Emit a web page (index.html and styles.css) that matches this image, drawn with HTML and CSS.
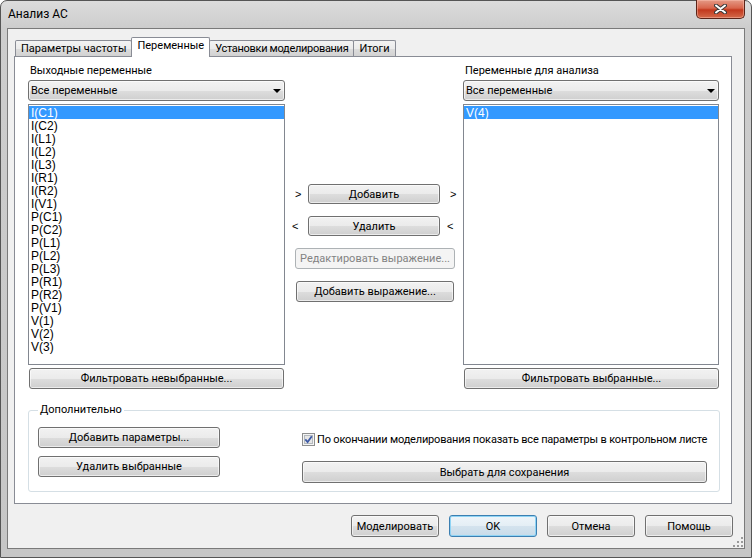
FILE: index.html
```html
<!DOCTYPE html>
<html lang="ru">

<head>
	<meta charset="UTF-8">
	<title>Анализ AC</title>
	<link rel="stylesheet" href="styles.css">
</head>

<body>
	<div class="window">
		<div class="titlebar">
			<span class="title">Анализ AC</span>
			<div class="close-btn">
				<svg width="13" height="10" viewBox="0 0 13 10">
					<path d="M2 1.5 L11 8.5 M11 1.5 L2 8.5" stroke="#3a3a3a" stroke-width="4" stroke-linecap="round" />
					<path d="M2 1.5 L11 8.5 M11 1.5 L2 8.5" stroke="#fff" stroke-width="2" stroke-linecap="round" />
				</svg>
			</div>
		</div>

		<div class="client">
			<div class="tabs">
				<div class="tab">Параметры частоты</div>
				<div class="tab active">Переменные</div>
				<div class="tab narrow">Установки моделирования</div>
				<div class="tab">Итоги</div>
			</div>

			<div class="tab-page">
				<div class="columns">
					<div class="var-col">
						<div class="label">Выходные переменные</div>
						<div class="combo">Все переменные <span class="arrow"></span></div>
						<ul class="listbox">
							<li class="selected">I(C1)</li>
							<li>I(C2)</li>
							<li>I(L1)</li>
							<li>I(L2)</li>
							<li>I(L3)</li>
							<li>I(R1)</li>
							<li>I(R2)</li>
							<li>I(V1)</li>
							<li>P(C1)</li>
							<li>P(C2)</li>
							<li>P(L1)</li>
							<li>P(L2)</li>
							<li>P(L3)</li>
							<li>P(R1)</li>
							<li>P(R2)</li>
							<li>P(V1)</li>
							<li>V(1)</li>
							<li>V(2)</li>
							<li>V(3)</li>
						</ul>
						<button class="btn filter-btn">Фильтровать невыбранные...</button>
					</div>

					<div class="mid-col">
						<div class="move-row">
							<span class="move-arrow">&gt;</span>
							<button class="btn move-btn">Добавить</button>
							<span class="move-arrow">&gt;</span>
						</div>
						<div class="move-row">
							<span class="move-arrow back">&lt;</span>
							<button class="btn move-btn">Удалить</button>
							<span class="move-arrow back">&lt;</span>
						</div>
						<button class="btn disabled edit-btn">Редактировать выражение...</button>
						<button class="btn expr-btn">Добавить выражение...</button>
					</div>

					<div class="var-col right">
						<div class="label">Переменные для анализа</div>
						<div class="combo">Все переменные <span class="arrow"></span></div>
						<ul class="listbox">
							<li class="selected">V(4)</li>
						</ul>
						<button class="btn filter-btn">Фильтровать выбранные...</button>
					</div>
				</div>

				<div class="group">
					<div class="group-title">Дополнительно</div>
					<div class="group-body">
						<div class="group-btns">
							<button class="btn">Добавить параметры...</button>
							<button class="btn">Удалить выбранные</button>
						</div>
						<div class="group-right">
							<label class="check-row">
								<svg class="checkbox" width="13" height="13" viewBox="0 0 13 13">
									<rect x="0.5" y="0.5" width="12" height="12" fill="#f4f4f4" stroke="#8e8f8f" />
									<rect x="2.5" y="2.5" width="8" height="8" fill="#e6e6e6" stroke="#b4b9be" />
									<path d="M3.3 6.4 L5.6 9 L9.8 3.2" fill="none" stroke="#3d5aa6" stroke-width="1.8" />
								</svg>
								По окончании моделирования показать все параметры в контрольном листе
							</label>
							<button class="btn save-btn">Выбрать для сохранения</button>
						</div>
					</div>
				</div>
			</div>

			<div class="dialog-buttons">
				<button class="btn">Моделировать</button>
				<button class="btn default">OK</button>
				<button class="btn">Отмена</button>
				<button class="btn">Помощь</button>
			</div>

			<svg class="grip" width="10" height="10" viewBox="0 0 10 10">
				<rect x="8" y="0" width="2" height="2" fill="#9a9a9a" />
				<rect x="4" y="4" width="2" height="2" fill="#9a9a9a" />
				<rect x="8" y="4" width="2" height="2" fill="#9a9a9a" />
				<rect x="0" y="8" width="2" height="2" fill="#9a9a9a" />
				<rect x="4" y="8" width="2" height="2" fill="#9a9a9a" />
				<rect x="8" y="8" width="2" height="2" fill="#9a9a9a" />
			</svg>
		</div>
	</div>
</body>

</html>
```

FILE: styles.css
```css
* {
	box-sizing: border-box;
}

body {
	margin: 0;
	background: #fff;
	font-family: Roboto, "Liberation Sans", sans-serif;
	font-size: 11px;
	color: #000;
}

.window {
	width: 752px;
	height: 558px;
	border: 1px solid #555;
	border-radius: 7px 7px 0 0;
	background: linear-gradient(to bottom, #dcdcdc 0, #cdcdcd 27px, #c6c6c6 100%);
	display: flex;
	flex-direction: column;
}

.titlebar {
	height: 27px;
	display: flex;
	justify-content: space-between;
	align-items: flex-start;
	padding-left: 7px;
}

.title {
	font-size: 12px;
	line-height: 16px;
	margin-top: 5px;
}

.close-btn {
	width: 49px;
	height: 19px;
	margin-top: -1px;
	margin-right: 6px;
	border: 1px solid #5c2418;
	border-top: none;
	border-radius: 0 0 5px 5px;
	background: linear-gradient(to bottom, #e49a86 0%, #d8654c 45%, #c2381d 55%, #d46a4a 100%);
	box-shadow: inset 0 0 0 1px rgba(255, 200, 185, 0.45);
	display: flex;
	justify-content: center;
	align-items: center;
}

.client {
	position: relative;
	margin-left: 6px;
	width: 738px;
	height: 521px;
	border: 1px solid #7a7a7a;
	background: #f0f0f0;
	display: flex;
	flex-direction: column;
}

/* tabs */
.tabs {
	display: flex;
	align-items: flex-end;
	height: 19px;
	margin: 8px 0 0 7px;
}

.tab {
	height: 16px;
	line-height: 15px;
	padding: 0 5px;
	margin-right: -1px;
	border: 1px solid #898c95;
	border-bottom: none;
	border-radius: 2px 2px 0 0;
	background: linear-gradient(to bottom, #f3f3f3 0%, #ebebeb 50%, #dddddd 51%, #d2d2d2 100%);
}

.tab.narrow {
	letter-spacing: -0.3px;
}

.tab.active {
	position: relative;
	z-index: 1;
	height: 20px;
	line-height: 16px;
	margin-bottom: -1px;
	background: #fff;
}

.tab-page {
	margin-left: 6px;
	width: 718px;
	height: 448px;
	border: 1px solid #898c95;
	background: #fff;
}

.columns {
	display: flex;
	padding: 7px 12px 0 13px;
}

.var-col {
	width: 257px;
	display: flex;
	flex-direction: column;
}

.var-col.right {
	width: 256px;
}

.label {
	line-height: 14px;
	padding-left: 2px;
}

.combo {
	height: 21px;
	margin-top: 2px;
	padding: 0 3px 0 2px;
	border: 1px solid #707070;
	border-radius: 3px;
	background: linear-gradient(to bottom, #f2f2f2 0%, #ebebeb 50%, #dddddd 51%, #cfcfcf 100%);
	box-shadow: inset 0 0 0 1px rgba(255, 255, 255, 0.6);
	display: flex;
	justify-content: space-between;
	align-items: center;
}

.arrow {
	width: 0;
	height: 0;
	border-left: 4px solid transparent;
	border-right: 4px solid transparent;
	border-top: 4px solid #000;
}

.listbox {
	height: 261px;
	margin: 3px 0 0;
	padding: 1px 0 0;
	list-style: none;
	border: 1px solid #828790;
	background: #fff;
	font-family: "Liberation Sans", Arial, sans-serif;
	font-size: 12px;
}

.listbox li {
	height: 13px;
	line-height: 15px;
	padding-left: 2px;
}

.listbox li.selected {
	background: #3399ff;
	color: #fff;
}

.btn {
	height: 21px;
	padding: 0;
	font-family: inherit;
	font-size: 11px;
	color: #000;
	border: 1px solid #707070;
	border-radius: 3px;
	background: linear-gradient(to bottom, #f2f2f2 0%, #ebebeb 50%, #dddddd 51%, #cfcfcf 100%);
	box-shadow: inset 0 0 0 1px rgba(255, 255, 255, 0.6);
}

.btn.disabled {
	color: #838383;
	border-color: #adb2b5;
	background: #f4f4f4;
	box-shadow: none;
}

.filter-btn {
	margin: 3px 1px 0;
}

.right .filter-btn {
	margin: 3px 0 0 1px;
}

/* middle column */
.mid-col {
	width: 178px;
	padding-top: 120px;
	display: flex;
	flex-direction: column;
	align-items: center;
}

.move-row {
	display: flex;
	align-items: center;
	margin-bottom: 12px;
}

.move-arrow {
	width: 23px;
	padding-left: 10px;
	font-family: "Liberation Sans", Arial, sans-serif;
	font-size: 11px;
}

.move-arrow.back {
	padding-left: 7px;
}

.move-btn {
	width: 132px;
	height: 20px;
}

.edit-btn {
	width: 160px;
	margin-left: 2px;
}

.expr-btn {
	width: 158px;
	margin-top: 12px;
	margin-left: 2px;
}

/* additional group */
.group {
	margin: 21px 0 0 13px;
	width: 692px;
	height: 82px;
	border: 1px solid #d5dfe5;
	border-radius: 3px;
}

.group-title {
	width: fit-content;
	margin: -8px 0 0 9px;
	padding: 0 2px;
	line-height: 14px;
	background: #fff;
}

.group-body {
	display: flex;
	padding: 10px 0 0 9px;
}

.group-btns {
	width: 182px;
	display: flex;
	flex-direction: column;
	gap: 8px;
}

.group-right {
	width: 405px;
	margin-left: 82px;
	display: flex;
	flex-direction: column;
}

.check-row {
	margin-top: 5px;
	height: 14px;
	display: flex;
	align-items: center;
	gap: 2px;
	white-space: nowrap;
	letter-spacing: -0.18px;
}

.checkbox {
	flex: none;
}

.save-btn {
	margin-top: 15px;
	height: 22px;
}

/* dialog buttons */
.dialog-buttons {
	display: flex;
	justify-content: flex-end;
	gap: 10px;
	margin-top: 11px;
	padding-right: 11px;
}

.dialog-buttons .btn {
	width: 88px;
	height: 22px;
}

.btn.default {
	border-color: #3c7fb1;
	box-shadow: inset 0 0 0 1px #8fd4f5;
	background: linear-gradient(to bottom, #eef5fa 0%, #e4eef5 50%, #d4e3ee 51%, #c8dbe9 100%);
}

.grip {
	position: absolute;
	right: 1px;
	bottom: 1px;
}
```
